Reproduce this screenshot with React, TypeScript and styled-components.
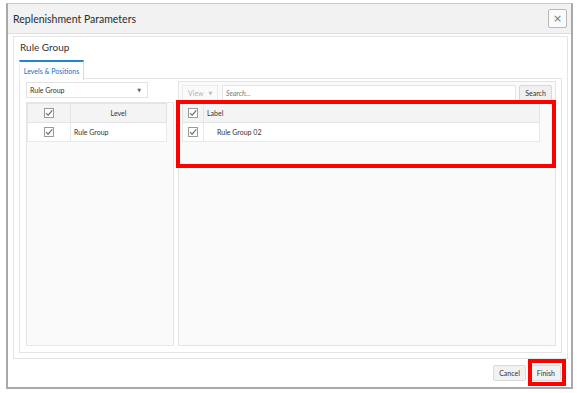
import styled, { createGlobalStyle } from 'styled-components';

const GlobalStyle = createGlobalStyle`
  html, body {
    margin: 0;
    padding: 0;
    background: #ffffff;
  }
  body {
    font-family: Lato, 'Open Sans', 'Liberation Sans', sans-serif;
    color: #333;
  }
  * {
    box-sizing: border-box;
  }
`;

const CheckMark = () => (
  <svg width="10" height="10" viewBox="0 0 10 10">
    <rect x="0.5" y="0.5" width="9" height="9" fill="#fff" stroke="#9a9a9a" />
    <path d="M2 5.2 L4.1 7.2 L8.3 2.4" fill="none" stroke="#666" strokeWidth="1.1" />
  </svg>
);

const App = () => {
  return (
    <>
      <GlobalStyle />
      <Page>
        <Dialog>
          <Header>
            <Title>Replenishment Parameters</Title>
            <CloseBtn aria-label="close">×</CloseBtn>
          </Header>

          <Body>
            <Card>
              <CardTitle>Rule Group</CardTitle>
              <TabStrip>
                <Tab $active>Levels &amp; Positions</Tab>
              </TabStrip>

              <TabPanel>
                <LeftCol>
                  <Select>
                    <span>Rule Group</span>
                    <Caret>▼</Caret>
                  </Select>
                  <TableBox>
                    <Table>
                      <thead>
                        <tr>
                          <HeadCell $check $center>
                            <CheckMark />
                          </HeadCell>
                          <HeadCell $center>Level</HeadCell>
                        </tr>
                      </thead>
                      <tbody>
                        <tr>
                          <Cell $check $center>
                            <CheckMark />
                          </Cell>
                          <Cell>Rule Group</Cell>
                        </tr>
                      </tbody>
                    </Table>
                  </TableBox>
                </LeftCol>

                <RightPanel>
                  <Toolbar>
                    <ViewBtn>
                      View <Caret>▼</Caret>
                    </ViewBtn>
                    <SearchInput placeholder="Search..." />
                    <SearchBtn>Search</SearchBtn>
                  </Toolbar>
                  <RightTable>
                    <thead>
                      <tr>
                        <HeadCell $check $narrow $center>
                          <CheckMark />
                        </HeadCell>
                        <HeadCell>Label</HeadCell>
                      </tr>
                    </thead>
                    <tbody>
                      <tr>
                        <Cell $check $narrow $center>
                          <CheckMark />
                        </Cell>
                        <Cell $indent>Rule Group 02</Cell>
                      </tr>
                    </tbody>
                  </RightTable>
                  <Highlight $top={18} $left={-3} $width={380} $height={68} />
                </RightPanel>
              </TabPanel>
            </Card>
          </Body>

          <Footer>
            <FooterBtn>Cancel</FooterBtn>
            <FinishWrap>
              <FooterBtn>Finish</FooterBtn>
              <Highlight $top={-6} $left={-3} $width={38} $height={27} />
            </FinishWrap>
          </Footer>
        </Dialog>
      </Page>
    </>
  );
};

export default App;

const Page = styled.div`
  padding: 3px 4px 4px 6px;
  width: 577px;
  height: 393px;
`;

const Dialog = styled.div`
  display: flex;
  flex-direction: column;
  width: 567px;
  height: 386px;
  background: #ffffff;
  border-top: 1px solid #c9c9c9;
  border-left: 2px solid #a9a9a9;
  border-right: 2px solid #a9a9a9;
  border-bottom: 2px solid #a9a9a9;
`;

const Header = styled.div`
  display: flex;
  align-items: center;
  justify-content: space-between;
  height: 30px;
  padding: 0 4px 0 5px;
  background: #f2f2f2;
  border-bottom: 1px solid #dedede;
`;

const Title = styled.div`
  font-size: 10.5px;
  color: #2b2b2b;
`;

const CloseBtn = styled.button`
  display: flex;
  align-items: center;
  justify-content: center;
  width: 19px;
  height: 19px;
  padding: 0;
  font-family: 'DejaVu Sans', sans-serif;
  font-size: 11px;
  color: #777;
  background: #fbfbfb;
  border: 1px solid #b8b8b8;
  border-radius: 2px;
`;

const Body = styled.div`
  padding: 2px 3px 0 5px;
`;

const Card = styled.div`
  display: flex;
  flex-direction: column;
  height: 323px;
  padding: 0 5px 5px 5px;
  border: 1px solid #e4e4e4;
  background: #ffffff;
`;

const CardTitle = styled.div`
  height: 23px;
  padding: 4px 0 0 1px;
  font-size: 10px;
  color: #333;
`;

const TabStrip = styled.div`
  display: flex;
  height: 19px;
  position: relative;
  z-index: 1;
  margin-bottom: -1px;
`;

const Tab = styled.div<{ $active?: boolean }>`
  display: flex;
  align-items: center;
  justify-content: center;
  width: 65px;
  height: 20px;
  font-size: 7px;
  color: ${({ $active }) => ($active ? '#0a72c9' : '#555')};
  background: #ffffff;
  border-top: 2px solid ${({ $active }) => ($active ? '#1f86d6' : 'transparent')};
  border-right: 1px solid #dcdcdc;
  border-left: 1px solid #eeeeee;
`;

const TabPanel = styled.div`
  flex: 1;
  display: flex;
  gap: 4px;
  padding: 2px 5px 6px 6px;
  border: 1px solid #e4e4e4;
`;

const LeftCol = styled.div`
  display: flex;
  flex-direction: column;
  width: 148px;
  padding-top: 1px;
  gap: 4px;
`;

const Select = styled.div`
  display: flex;
  align-items: center;
  justify-content: space-between;
  width: 122px;
  height: 16px;
  padding: 0 6px 0 3px;
  font-size: 7px;
  color: #333;
  background: #ffffff;
  border: 1px solid #e2e2e2;
`;

const Caret = styled.span`
  font-family: 'DejaVu Sans', sans-serif;
  font-size: 5px;
  color: #666;
`;

const TableBox = styled.div`
  flex: 1;
  border: 1px solid #e6e6e6;
  background: #fafafa;
`;

const Table = styled.table`
  width: calc(100% - 6px);
  border-collapse: collapse;
  background: #ffffff;
`;

const HeadCell = styled.th<{ $check?: boolean; $center?: boolean; $narrow?: boolean }>`
  width: ${({ $check, $narrow }) => ($check ? ($narrow ? '21px' : '43px') : 'auto')};
  height: ${({ $narrow }) => ($narrow ? '14px' : '19px')};
  padding: ${({ $center }) => ($center ? '0' : '0 3px')};
  font-size: 7px;
  font-weight: 400;
  color: #333;
  text-align: ${({ $center }) => ($center ? 'center' : 'left')};
  background: #f4f4f4;
  border: 1px solid #e4e4e4;
  line-height: 0;
`;

const Cell = styled.td<{ $check?: boolean; $center?: boolean; $narrow?: boolean; $indent?: boolean }>`
  width: ${({ $check, $narrow }) => ($check ? ($narrow ? '21px' : '43px') : 'auto')};
  height: ${({ $narrow }) => ($narrow ? '14px' : '19px')};
  padding: ${({ $center, $indent }) => ($center ? '0' : $indent ? '0 0 0 13px' : '0 3px')};
  font-size: 7px;
  color: #333;
  text-align: ${({ $center }) => ($center ? 'center' : 'left')};
  background: #ffffff;
  border: 1px solid #e8e8e8;
  line-height: 0;
`;

const RightPanel = styled.div`
  position: relative;
  flex: 1;
  padding: 2px 3px;
  border: 1px solid #e4e4e4;
  background: #fafafa;
`;

const Toolbar = styled.div`
  display: flex;
  align-items: center;
  gap: 3px;
  height: 18px;
  margin-bottom: 1px;
`;

const ViewBtn = styled.div`
  display: flex;
  align-items: center;
  gap: 5px;
  width: 36px;
  height: 16px;
  padding-left: 5px;
  font-size: 7px;
  color: #b5b5b5;
  background: #fafafa;
  border: 1px solid #ececec;
  span {
    color: #bbb;
  }
`;

const SearchInput = styled.input`
  flex: 1;
  height: 16px;
  margin-left: 1px;
  padding: 0 3px;
  font-family: Lato, 'Open Sans', 'Liberation Sans', sans-serif;
  font-size: 7px;
  color: #333;
  background: #ffffff;
  border: 1px solid #e6e6e6;
  outline: none;
  &::placeholder {
    font-style: italic;
    color: #777;
  }
`;

const SearchBtn = styled.button`
  width: 33px;
  height: 16px;
  padding: 0;
  font-family: Lato, 'Open Sans', 'Liberation Sans', sans-serif;
  font-size: 7px;
  color: #333;
  background: #f0f0f0;
  border: 1px solid #d8d8d8;
  border-radius: 2px;
`;

const RightTable = styled.table`
  width: 358px;
  border-collapse: collapse;
`;

const Highlight = styled.div<{ $top: number; $left: number; $width: number; $height: number }>`
  position: absolute;
  top: ${({ $top }) => $top}px;
  left: ${({ $left }) => $left}px;
  width: ${({ $width }) => $width}px;
  height: ${({ $height }) => $height}px;
  border: 4px solid #ff0000;
  pointer-events: none;
`;

const Footer = styled.div`
  flex: 1;
  display: flex;
  align-items: center;
  justify-content: flex-end;
  gap: 5px;
  padding: 0 10px 0 0;
`;

const FinishWrap = styled.div`
  position: relative;
  display: flex;
`;

const FooterBtn = styled.button`
  height: 16px;
  padding: 0 5px;
  font-family: Lato, 'Open Sans', 'Liberation Sans', sans-serif;
  font-size: 7px;
  color: #333;
  background: #f2f2f2;
  border: 1px solid #dadada;
  border-radius: 2px;
`;
